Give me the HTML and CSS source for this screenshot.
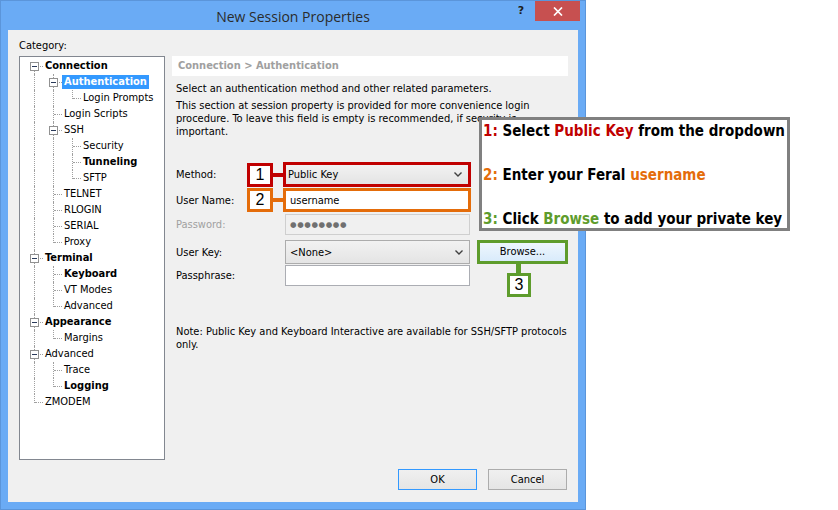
FILE: index.html
```html
<!DOCTYPE html>
<html>
<head>
<meta charset="utf-8">
<title>New Session Properties</title>
<link rel="stylesheet" href="styles.css">
</head>
<body>
<div class="page">
  <div class="window">
    <div class="titlebar">
      <div class="tb-side"></div>
      <div class="title">New Session Properties</div>
      <div class="tb-side controls">
        <span class="help">?</span>
        <span class="close"><svg width="10" height="9" viewBox="0 0 10 9"><path d="M1 0.5 L9 8.5 M9 0.5 L1 8.5" stroke="#fff" stroke-width="1.7"/></svg></span>
      </div>
    </div>
    <div class="client">
      <div class="main">
        <div class="left">
          <div class="cat-label">Category:</div>
          <div class="tree">
            <div class="row"><span class="c f"><i class="box"></i></span><span class="lbl b">Connection</span></div>
            <div class="row"><span class="c v"></span><span class="c t"><i class="box"></i></span><span class="lbl b sel">Authentication</span></div>
            <div class="row"><span class="c v"></span><span class="c v"></span><span class="c l"></span><span class="lbl">Login Prompts</span></div>
            <div class="row"><span class="c v"></span><span class="c t"></span><span class="lbl">Login Scripts</span></div>
            <div class="row"><span class="c v"></span><span class="c t"><i class="box"></i></span><span class="lbl">SSH</span></div>
            <div class="row"><span class="c v"></span><span class="c v"></span><span class="c t"></span><span class="lbl">Security</span></div>
            <div class="row"><span class="c v"></span><span class="c v"></span><span class="c t"></span><span class="lbl b">Tunneling</span></div>
            <div class="row"><span class="c v"></span><span class="c v"></span><span class="c l"></span><span class="lbl">SFTP</span></div>
            <div class="row"><span class="c v"></span><span class="c t"></span><span class="lbl">TELNET</span></div>
            <div class="row"><span class="c v"></span><span class="c t"></span><span class="lbl">RLOGIN</span></div>
            <div class="row"><span class="c v"></span><span class="c t"></span><span class="lbl">SERIAL</span></div>
            <div class="row"><span class="c v"></span><span class="c l"></span><span class="lbl">Proxy</span></div>
            <div class="row"><span class="c t"><i class="box"></i></span><span class="lbl b">Terminal</span></div>
            <div class="row"><span class="c v"></span><span class="c t"></span><span class="lbl b">Keyboard</span></div>
            <div class="row"><span class="c v"></span><span class="c t"></span><span class="lbl">VT Modes</span></div>
            <div class="row"><span class="c v"></span><span class="c l"></span><span class="lbl">Advanced</span></div>
            <div class="row"><span class="c t"><i class="box"></i></span><span class="lbl b">Appearance</span></div>
            <div class="row"><span class="c v"></span><span class="c l"></span><span class="lbl">Margins</span></div>
            <div class="row"><span class="c t"><i class="box"></i></span><span class="lbl">Advanced</span></div>
            <div class="row"><span class="c v"></span><span class="c t"></span><span class="lbl">Trace</span></div>
            <div class="row"><span class="c v"></span><span class="c l"></span><span class="lbl b">Logging</span></div>
            <div class="row"><span class="c l"></span><span class="lbl">ZMODEM</span></div>
          </div>
        </div>
        <div class="right">
          <div class="crumb">Connection &gt; Authentication</div>
          <p class="p1">Select an authentication method and other related parameters.</p>
          <p class="p2">This section at session property is provided for more convenience login<br>procedure. To leave this field is empty is recommended, if security is<br>important.</p>
          <div class="form">
            <div class="frow r1">
              <span class="flabel">Method:</span>
              <span class="badge red">1</span>
              <span class="conn red-bg"></span>
              <div class="combo hl-red"><span>Public Key</span><svg class="chev" width="8" height="5" viewBox="0 0 8 5"><path d="M0.5 0.5 L4 4 L7.5 0.5" fill="none" stroke="#404040" stroke-width="1.4"/></svg></div>
            </div>
            <div class="frow r2">
              <span class="flabel">User Name:</span>
              <span class="badge orange">2</span>
              <span class="conn orange-bg"></span>
              <div class="text hl-orange">username</div>
            </div>
            <div class="frow r3">
              <span class="flabel dis">Password:</span>
              <span></span><span></span>
              <div class="text plain disabled"><span class="dots">●●●●●●●●</span></div>
            </div>
            <div class="frow r4">
              <span class="flabel">User Key:</span>
              <span></span><span></span>
              <div class="combo plain"><span>&lt;None&gt;</span><svg class="chev" width="8" height="5" viewBox="0 0 8 5"><path d="M0.5 0.5 L4 4 L7.5 0.5" fill="none" stroke="#404040" stroke-width="1.4"/></svg></div>
              <div class="browse-wrap">
                <div class="browse">Browse...</div>
                <span class="vconn"></span>
                <span class="badge green b3">3</span>
              </div>
            </div>
            <div class="frow r5">
              <span class="flabel">Passphrase:</span>
              <span></span><span></span>
              <div class="text plain"></div>
            </div>
          </div>
          <p class="note">Note: Public Key and Keyboard Interactive are available for SSH/SFTP protocols<br>only.</p>
        </div>
      </div>
      <div class="footer">
        <div class="btn ok">OK</div>
        <div class="btn">Cancel</div>
      </div>
    </div>
  </div>
  <div class="callout">
    <div class="cl"><span class="red-t">1:</span> Select <span class="red-t">Public Key</span> from the dropdown</div>
    <div class="cl"><span class="orange-t">2:</span> Enter your Feral <span class="orange-t">username</span></div>
    <div class="cl"><span class="green-t">3:</span> Click <span class="green-t">Browse</span> to add your private key</div>
  </div>
</div>
</body>
</html>
```
FILE: styles.css
```css
* { box-sizing: border-box; }
html, body { margin: 0; padding: 0; background: #fff; }
body {
  font-family: "DejaVu Sans Condensed", "DejaVu Sans", sans-serif;
  font-size: 11px;
  color: #000;
}
.page { position: relative; width: 838px; height: 510px; }

.window {
  width: 586px;
  height: 510px;
  background: #6aabf5;
  border: 1px solid #5b95da;
  display: flex;
  flex-direction: column;
}
.titlebar {
  height: 29px;
  display: grid;
  grid-template-columns: 1fr auto 1fr;
  align-items: start;
}
.title {
  font-family: "Open Sans", "Noto Sans", sans-serif;
  font-size: 14px;
  color: #2b2b2b;
  line-height: 29px;
  padding-top: 1px;
}
.controls { display: flex; justify-content: flex-end; align-items: flex-start; padding-right: 5px; }
.help {
  width: 28px; height: 20px;
  font-family: "DejaVu Sans", sans-serif;
  font-weight: bold; font-size: 11px; color: #1e1e1e;
  text-align: center; line-height: 20px;
}
.close {
  width: 45px; height: 20px;
  background: #c75050;
  display: flex; align-items: center; justify-content: center;
}

.client {
  flex: 1;
  margin: 0 7px 7px 7px;
  background: #f0f0f0;
  padding: 9px 10px 0 11px;
  display: flex;
  flex-direction: column;
}
.main { display: flex; gap: 7px; }
.left { width: 146px; display: flex; flex-direction: column; }
.cat-label { line-height: 13px; height: 13px; }
.tree {
  margin-top: 4px;
  height: 404px;
  background: #fff;
  border: 1px solid #828790;
  padding: 1px 0 0 4px;
}
.row { display: flex; height: 16px; align-items: center; white-space: nowrap; }
.c { width: 19px; height: 16px; flex: none; position: relative; }
.c::before, .c::after { content: ""; position: absolute; }
.v::before, .t::before { left: 10px; top: 0; height: 16px; border-left: 1px dotted #a0a0a0; }
.l::before { left: 10px; top: 0; height: 9px; border-left: 1px dotted #a0a0a0; }
.f::before { left: 10px; top: 8px; height: 8px; border-left: 1px dotted #a0a0a0; }
.t::after, .l::after, .f::after { left: 11px; top: 8px; width: 8px; border-top: 1px dotted #a0a0a0; }
.box {
  position: absolute; left: 6px; top: 4px;
  width: 9px; height: 9px;
  border: 1px solid #919191;
  background: #fff;
  z-index: 1;
}
.box::after { content: ""; position: absolute; left: 1px; top: 3px; width: 5px; height: 1px; background: #2a3a5a; }
.lbl { padding: 0 2px; line-height: 14px; height: 14px; }
.b { font-weight: bold; }
.sel { background: #3399ff; color: #fff; }

.right { width: 396px; display: flex; flex-direction: column; padding-top: 17px; }
.crumb {
  height: 20px; line-height: 20px;
  background: #fff;
  color: #a0a0a0;
  font-weight: bold;
  padding-left: 6px;
}
.right p { margin: 0; padding-left: 4px; line-height: 13px; }
.p1 { margin-top: 6px !important; }
.p2 { margin-top: 4px !important; }
.form { margin-top: 24px; padding-left: 4px; display: flex; flex-direction: column; }
.frow {
  display: grid;
  grid-template-columns: 71px 26px 10px 188px auto;
  align-items: center;
}
.r1 { height: 25px; }
.r2 { height: 24px; margin-top: 1px; }
.r3 { height: 21px; margin-top: 2px; }
.r4 { height: 21px; margin-top: 5px; }
.r5 { height: 21px; margin-top: 4px; }
.flabel { line-height: 13px; }
.dis { color: #a0a0a0; }
.badge {
  width: 26px; height: 24px;
  border: 3px solid;
  background: #fff;
  font-family: "Liberation Sans", Arial, sans-serif;
  font-size: 16px;
  line-height: 18px;
  text-align: center;
  color: #000;
}
.badge.red { border-color: #c00000; }
.badge.orange { border-color: #e46c0a; }
.badge.green { border-color: #5e9c2c; }
.conn { height: 4px; }
.red-bg { background: #c00000; }
.orange-bg { background: #e46c0a; }

.combo {
  height: 100%;
  display: flex; align-items: center; justify-content: space-between;
  background: linear-gradient(#f2f2f2, #e4e4e4);
  padding: 0 6px 0 2px;
}
.combo.hl-red { border: 3px solid #c00000; }
.combo.plain { border: 1px solid #acacac; margin: 0 1px 0 2px; padding-left: 4px; }
.text {
  height: 100%;
  display: flex; align-items: center;
  background: #fff;
}
.text.hl-orange { border: 3px solid #e46c0a; padding-left: 4px; }
.text.plain { border: 1px solid #abadb3; margin: 0 1px 0 2px; padding-left: 4px; }
.text.disabled { background: #f0f0f0; border-color: #cfcfcf; }
.dots { color: #707070; font-size: 7.5px; letter-spacing: 0.6px; font-family: "DejaVu Sans", sans-serif; }

.browse-wrap { position: relative; margin-left: 6px; width: 91px; height: 24px; }
.browse {
  height: 24px;
  border: 3px solid #5e9c2c;
  background: linear-gradient(#eef6fd, #d9ebfb);
  text-align: center;
  line-height: 18px;
}
.vconn { position: absolute; left: 39px; top: 24px; width: 5px; height: 10px; background: #5e9c2c; }
.b3 { position: absolute; left: 30px; top: 33px; width: 24px; height: 24px; }

.note { margin-top: 39px !important; }

.footer { margin-top: 9px; display: flex; justify-content: flex-end; gap: 11px; padding-right: 1px; }
.btn {
  width: 79px; height: 21px;
  border: 1px solid #acacac;
  background: linear-gradient(#f0f0f0, #e5e5e5);
  text-align: center; line-height: 19px;
}
.btn.ok { border-color: #3399ff; }

.callout {
  position: absolute;
  left: 479px; top: 117px;
  width: 311px; height: 114px;
  border: 3px solid #808080;
  background: #fff;
  padding-left: 1px;
  font-family: "DejaVu Sans Condensed", "DejaVu Sans", sans-serif;
  font-weight: bold;
  font-size: 15px;
  color: #000;
}
.cl { line-height: 22px; height: 22px; margin-bottom: 22px; white-space: nowrap; }
.red-t { color: #c00000; }
.orange-t { color: #e46c0a; }
.green-t { color: #5e9c2c; }
```
